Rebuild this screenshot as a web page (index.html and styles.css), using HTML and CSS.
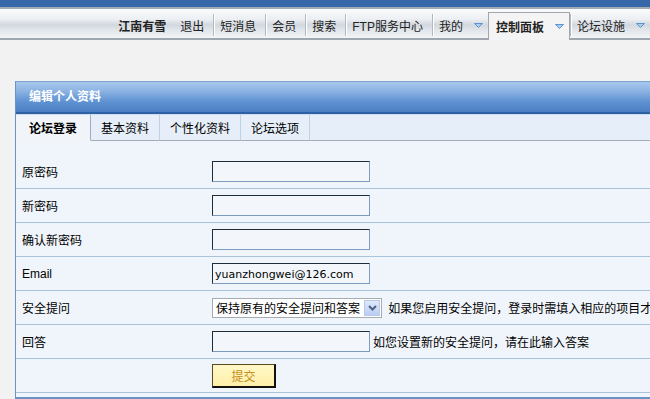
FILE: index.html
```html
<!DOCTYPE html>
<html lang="zh-CN">
<head>
    <meta charset="UTF-8">
    <title>编辑个人资料</title>
    <link rel="stylesheet" href="styles.css">
</head>
<body>
    <div class="topbar"></div>
    <div class="nav">
        <ul>
            <li class="user">江南有雪</li>
            <li>退出</li>
            <li class="sep">短消息</li>
            <li class="sep">会员</li>
            <li class="sep">搜索</li>
            <li class="sep">FTP服务中心</li>
            <li class="sep drop">我的<svg class="arrow" width="9" height="5"><polygon points="0.5,0.5 8.5,0.5 4.5,4.5" /></svg></li>
            <li class="current drop">控制面板<svg class="arrow" width="9" height="5"><polygon points="0.5,0.5 8.5,0.5 4.5,4.5" /></svg></li>
            <li class="sep drop">论坛设施<svg class="arrow" width="9" height="5"><polygon points="0.5,0.5 8.5,0.5 4.5,4.5" /></svg></li>
        </ul>
    </div>

    <div class="panel">
        <div class="panel-title">编辑个人资料</div>
        <div class="tabs">
            <span class="tab active">论坛登录</span>
            <span class="tab">基本资料</span>
            <span class="tab">个性化资料</span>
            <span class="tab">论坛选项</span>
            <span class="tab-fill"></span>
        </div>
        <div class="panel-body">
            <table class="form-table">
                <tr>
                    <th>原密码</th>
                    <td><input type="password" class="txt"></td>
                </tr>
                <tr>
                    <th>新密码</th>
                    <td><input type="password" class="txt"></td>
                </tr>
                <tr>
                    <th>确认新密码</th>
                    <td><input type="password" class="txt"></td>
                </tr>
                <tr>
                    <th>Email</th>
                    <td><input type="text" class="txt" value="yuanzhongwei@126.com"></td>
                </tr>
                <tr>
                    <th>安全提问</th>
                    <td>
                        <div class="fake-select">
                            <span class="fake-select-text">保持原有的安全提问和答案</span>
                            <span class="fake-select-btn"><svg width="9" height="6"><polyline points="1,1 4.5,4.5 8,1" /></svg></span>
                        </div>
                        <span class="hint">如果您启用安全提问，登录时需填入相应的项目才</span>
                    </td>
                </tr>
                <tr>
                    <th>回答</th>
                    <td><input type="text" class="txt"><span class="hint">如您设置新的安全提问，请在此输入答案</span></td>
                </tr>
                <tr>
                    <th></th>
                    <td><button class="submit">提交</button></td>
                </tr>
            </table>
        </div>
    </div>
</body>
</html>
```

FILE: styles.css
```css
html, body {
    overflow: hidden;
}
body {
    margin: 0;
    background-color: #f2f2f2;
    font-family: "Liberation Sans", "Noto Sans CJK SC", sans-serif;
    font-size: 12px;
    color: #000;
}
.topbar {
    height: 7px;
    background-color: #3667a8;
}
.nav {
    height: 29px;
    border-top: 2px solid #a2abb5;
    border-bottom: 2px solid #9ea7b1;
    background: linear-gradient(#fbfcfd 0, #eceff3 35%, #d3d8df 55%, #e3e7ec 75%, #f3f5f7 100%);
}
.nav ul {
    list-style: none;
    margin: 0;
    padding: 3px 0 0 0;
    height: 26px;
    display: flex;
    justify-content: flex-end;
    color: #222;
}
.nav li {
    display: flex;
    align-items: center;
    padding-right: 9px;
    white-space: nowrap;
}
.nav li.sep::before {
    content: '';
    width: 1px;
    height: 22px;
    background-color: #b1b8c1;
    border-right: 1px solid #fff;
    margin-right: 5px;
}
.nav li.user {
    font-weight: bold;
    padding-right: 14px;
}
.nav li.drop {
    padding-right: 5px;
}
.nav li.current {
    font-weight: bold;
    padding-left: 7px;
    margin-bottom: -2px;
    background-color: #f4f4f4;
    border: 1px solid #a3a7ab;
    border-bottom: none;
}
.nav .arrow {
    margin-left: 11px;
}
.nav .arrow polygon {
    fill: #a9cdf0;
    stroke: #5d93cc;
    stroke-width: 1;
}
.panel {
    margin: 41px 0 0 15px;
    width: 760px;
    border: 1px solid #6a93c4;
    border-top-color: #7ca2d2;
    border-bottom: 2px solid #6a93c4;
}
.panel-title {
    height: 30px;
    line-height: 31px;
    padding-left: 13px;
    color: #fff;
    font-weight: bold;
    background: linear-gradient(#a8c7ec 0, #8cb3e3 30%, #5f92d2 65%, #4a7fc4 100%);
    border-bottom: 2px solid #2e61a3;
}
.tabs {
    display: flex;
    height: 26px;
    background-color: #e6eff9;
    border-top: 1px solid #c9dcf0;
}
.tab {
    display: flex;
    align-items: center;
    padding: 0 10px;
    border-right: 1px solid #bfd0e2;
    border-bottom: 1px solid #a5adb6;
}
.tab.active {
    font-weight: bold;
    padding: 0 13px;
    background-color: #f1f5f9;
    border-bottom-color: #f1f5f9;
    border-right-color: #a5adb6;
}
.tab-fill {
    flex: 1;
    border-bottom: 1px solid #a5adb6;
}
.panel-body {
    background-color: #f0f5fb;
    padding: 14px 0 4px 0;
}
.form-table {
    width: 100%;
    border-collapse: collapse;
}
.form-table th, .form-table td {
    height: 33px;
    padding: 0;
    border-bottom: 1px solid #a9c3db;
    text-align: left;
    font-weight: normal;
    white-space: nowrap;
    vertical-align: middle;
}
.form-table th {
    width: 190px;
    padding-left: 6px;
}
.txt {
    box-sizing: border-box;
    width: 158px;
    height: 21px;
    margin: 0;
    padding: 1px 2px 0 2px;
    vertical-align: middle;
    font-family: "DejaVu Sans", "Noto Sans CJK SC", sans-serif;
    font-size: 11px;
    color: #000;
    background-color: #f3f7fc;
    border: 1px solid #7c9dc0;
    border-top-color: #1f2c3a;
    border-left-color: #1f2c3a;
}
.hint {
    margin-left: 3px;
    vertical-align: middle;
}
.fake-select {
    display: inline-flex;
    align-items: center;
    box-sizing: border-box;
    width: 170px;
    height: 20px;
    vertical-align: middle;
    background-color: #fff;
    border: 1px solid #a5acb2;
}
.fake-select-text {
    flex: 1;
    padding-left: 3px;
}
.fake-select-btn {
    display: flex;
    align-items: center;
    justify-content: center;
    box-sizing: border-box;
    width: 16px;
    height: 16px;
    margin-right: 1px;
    background: linear-gradient(#dfe8fb, #bccdf3);
    border: 1px solid #b8c7ea;
}
.fake-select-btn polyline {
    fill: none;
    stroke: #4d6185;
    stroke-width: 2;
}
.submit {
    box-sizing: border-box;
    width: 64px;
    height: 24px;
    margin: 0;
    padding: 0;
    font-family: "Liberation Sans", "Noto Sans CJK SC", sans-serif;
    font-size: 12px;
    color: #c4901e;
    background: linear-gradient(#fff8c8, #ffefa8);
    border: 1px solid #5a4a20;
    border-right: 2px solid #111;
    border-bottom: 2px solid #111;
}
```
